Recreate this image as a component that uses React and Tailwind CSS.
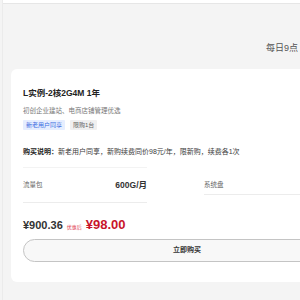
export default function App() {
  const cjk = { fontFamily: '"Liberation Sans", "Noto Sans CJK SC", sans-serif' };
  return (
    <div className="w-[300px] h-[300px] overflow-hidden bg-[#f4f4f4]" style={cjk}>
      <div className="w-[380px] h-[300px] ml-[2px] border-l border-[#ebebeb] flex flex-col">
        <div className="h-[4px] bg-white border-b border-[#e6e6e6] shrink-0" />
        <div className="h-[65px] shrink-0 flex items-start pt-[38px] pl-[263px]">
          <span className="text-[9px] leading-[12px] text-[#555] whitespace-nowrap">每日9点</span>
        </div>
        <div className="ml-[8px] w-[360px] h-[213px] bg-white rounded-l-[6px] pl-[12px] pr-[20px] pt-[18px] flex flex-col shrink-0">
          <div className="text-[8.5px] leading-[12px] font-bold text-[#222]">L实例-2核2G4M 1年</div>
          <div className="mt-[7px] text-[6.5px] leading-[10px] text-[#777]">初创企业建站、电商店铺管理优选</div>
          <div className="mt-[4px] flex gap-[5px]">
            <span className="px-[3px] h-[10px] flex items-center text-[6px] bg-[#e6eeff] text-[#3a6be0] rounded-[1px]">新老用户同享</span>
            <span className="px-[3px] h-[10px] flex items-center text-[6px] bg-[#f0f0f0] text-[#666] rounded-[1px]">限购1台</span>
          </div>
          <div className="mt-[17px] text-[7px] leading-[10px] text-[#3a3a3a] whitespace-nowrap">
            <span className="font-bold text-[#222]">购买说明：</span>新老用户同享，新购续费同价98元/年，限新购，续费各1次
          </div>
          <div className="mt-[10px] border-t border-[#f3f3f3] w-[124px]" />
          <div className="mt-[12px] flex items-start gap-[57px]">
            <div className="w-[124px] flex justify-between items-center border-b border-[#ececec] pb-[12px]">
              <span className="text-[6.5px] leading-[10px] text-[#666]">流量包</span>
              <span className="text-[8.5px] leading-[10px] font-bold text-[#333]">600G/月</span>
            </div>
            <div className="flex-1 border-b border-[#ececec] pb-[4px] text-[6.5px] leading-[10px] text-[#666]">
              系统盘
            </div>
          </div>
          <div className="mt-[15px] flex items-baseline gap-[4px] whitespace-nowrap">
            <span className="text-[11px] leading-[14px] font-semibold text-[#333]">¥900.36</span>
            <span className="text-[5px] text-[#e04050]">优惠后</span>
            <span className="text-[13px] leading-[14px] font-bold text-[#c8142a]">¥98.00</span>
          </div>
          <div className="mt-[7px] h-[23px] rounded-full border-[1.5px] border-[#c4c4c4] bg-[#f8f8f8] flex items-center justify-center">
            <span className="text-[7px] font-bold text-[#333]">立即购买</span>
          </div>
        </div>
      </div>
    </div>
  );
}
